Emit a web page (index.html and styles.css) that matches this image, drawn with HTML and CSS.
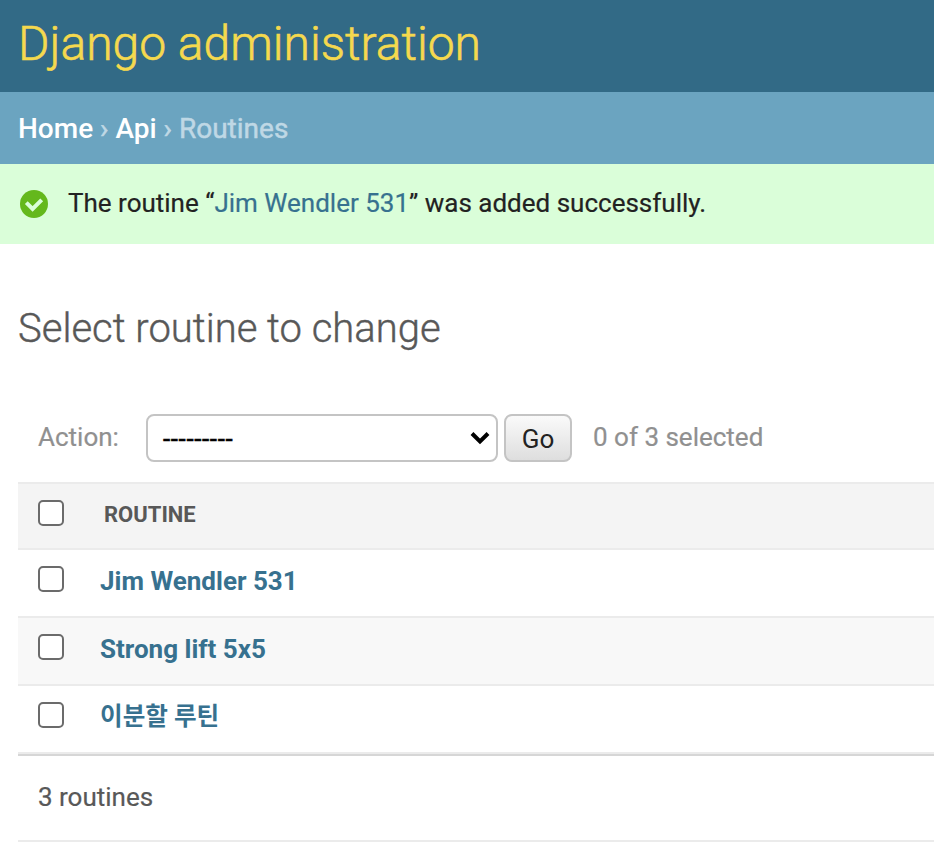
FILE: index.html
```html
<!DOCTYPE html>
<html lang="en">
<head>
<meta charset="utf-8">
<title>Select routine to change | Django site admin</title>
<link rel="stylesheet" href="styles.css">
</head>
<body>
<header class="header"><h1><a href="#">Django administration</a></h1></header>
<nav class="breadcrumbs"><a href="#">Home</a> › <a href="#">Api</a> › Routines</nav>
<div class="success">
  <svg class="tick" viewBox="0 0 28 28"><circle cx="14" cy="14" r="14" fill="#64b81c"/><path d="M6.3 12.7l6.3 6.3L21.7 9.9" fill="none" stroke="#dafed9" stroke-width="4"/></svg>
  <span class="message">The routine “<a href="#">Jim Wendler 531</a>” was added successfully.</span>
</div>
<main class="content">
  <h2>Select routine to change</h2>
  <div class="actions">
    <span class="label">Action:</span>
    <div class="select"><span class="value">---------</span><svg class="chevron" viewBox="0 0 20 14"><path d="M2 2.5l8 8 8-8" fill="none" stroke="#000" stroke-width="4"/></svg></div>
    <button class="go">Go</button>
    <span class="counter">0 of 3 selected</span>
  </div>
  <div class="results">
    <div class="row head"><span class="box"></span><span class="heading">ROUTINE</span></div>
    <div class="row"><span class="box"></span><a href="#">Jim Wendler 531</a></div>
    <div class="row alt"><span class="box"></span><a href="#">Strong lift 5x5</a></div>
    <div class="row"><span class="box"></span><a class="korean" lang="ko" href="#">이분할 루틴</a></div>
  </div>
  <p class="paginator">3 routines</p>
</main>
</body>
</html>
```
FILE: styles.css
```css
* { box-sizing: border-box; }
body { margin: 0; height: 862px; overflow: hidden; background: #fff; color: #333; font-family: Roboto, "Noto Sans CJK KR", sans-serif; font-size: 26px; }
a { color: #37718f; text-decoration: none; }
.header { height: 92px; padding: 14px 18px; background: #326a86; }
.header h1 { margin: 0; font-size: 48px; line-height: 60px; font-weight: 300; -webkit-text-stroke: .6px #f5d94e; }
.header a { color: #f5d94e; }
.breadcrumbs { height: 72px; padding: 0 18px; background: #6ba4c0; color: #bfd8e5; font-size: 28px; line-height: 73px; font-weight: 400; white-space: nowrap; -webkit-text-stroke: .5px; }
.breadcrumbs a { color: #fff; font-weight: 500; -webkit-text-stroke: 0; }
.success { display: flex; align-items: center; height: 80px; padding: 0 20px; background: #dafed9; color: #222; }
.tick { width: 28px; height: 28px; margin-right: 20px; }
.message { padding-bottom: 2px; white-space: nowrap; -webkit-text-stroke: .2px; }
.content { padding-left: 18px; }
h2 { margin: 60px 0 60px; color: #585858; font-size: 40px; line-height: 50px; font-weight: 300; -webkit-text-stroke: .4px; }
.actions { display: flex; align-items: center; height: 48px; padding-left: 20px; margin-bottom: 20px; color: #909090; }
.label { width: 108px; padding-bottom: 2px; -webkit-text-stroke: .2px; }
.counter { padding-bottom: 2px; -webkit-text-stroke: .2px; }
.select { display: flex; align-items: center; justify-content: space-between; width: 352px; height: 48px; padding: 0 6px 0 15px; border: 2px solid #c4c4c4; border-radius: 8px; color: #000; }
.value { padding-top: 1px; letter-spacing: .62px; -webkit-text-stroke: .5px; }
.chevron { width: 20px; height: 14px; }
.go { width: 68px; height: 48px; margin: 0 21px 0 6px; padding: 2px 0 0; border: 2px solid #c4c4c4; border-radius: 8px; background: linear-gradient(#fafafa, #dedede); color: #222; font: inherit; }
.row { display: flex; align-items: center; height: 68px; padding: 0 0 4px 20px; border-bottom: 2px solid #ebebeb; font-weight: 700; }
.row.head { border-top: 2px solid #ebebeb; background: #f4f4f4; }
.row.alt { background: #f8f8f8; }
.box { width: 26px; height: 26px; margin: 0 36px 4px 0; border: 2px solid #6b6b6b; border-radius: 5px; background: #fff; }
.head .box { margin-bottom: 2px; }
.heading { margin-left: 4px; color: #585858; font-size: 22px; }
.korean { padding-bottom: 6px; font-size: 24.6px; }
.paginator { height: 88px; margin: 0; padding-left: 20px; border-top: 2px solid #d6d6d6; border-bottom: 2px solid #ebebeb; color: #585858; line-height: 82px; -webkit-text-stroke: .2px; }
```
